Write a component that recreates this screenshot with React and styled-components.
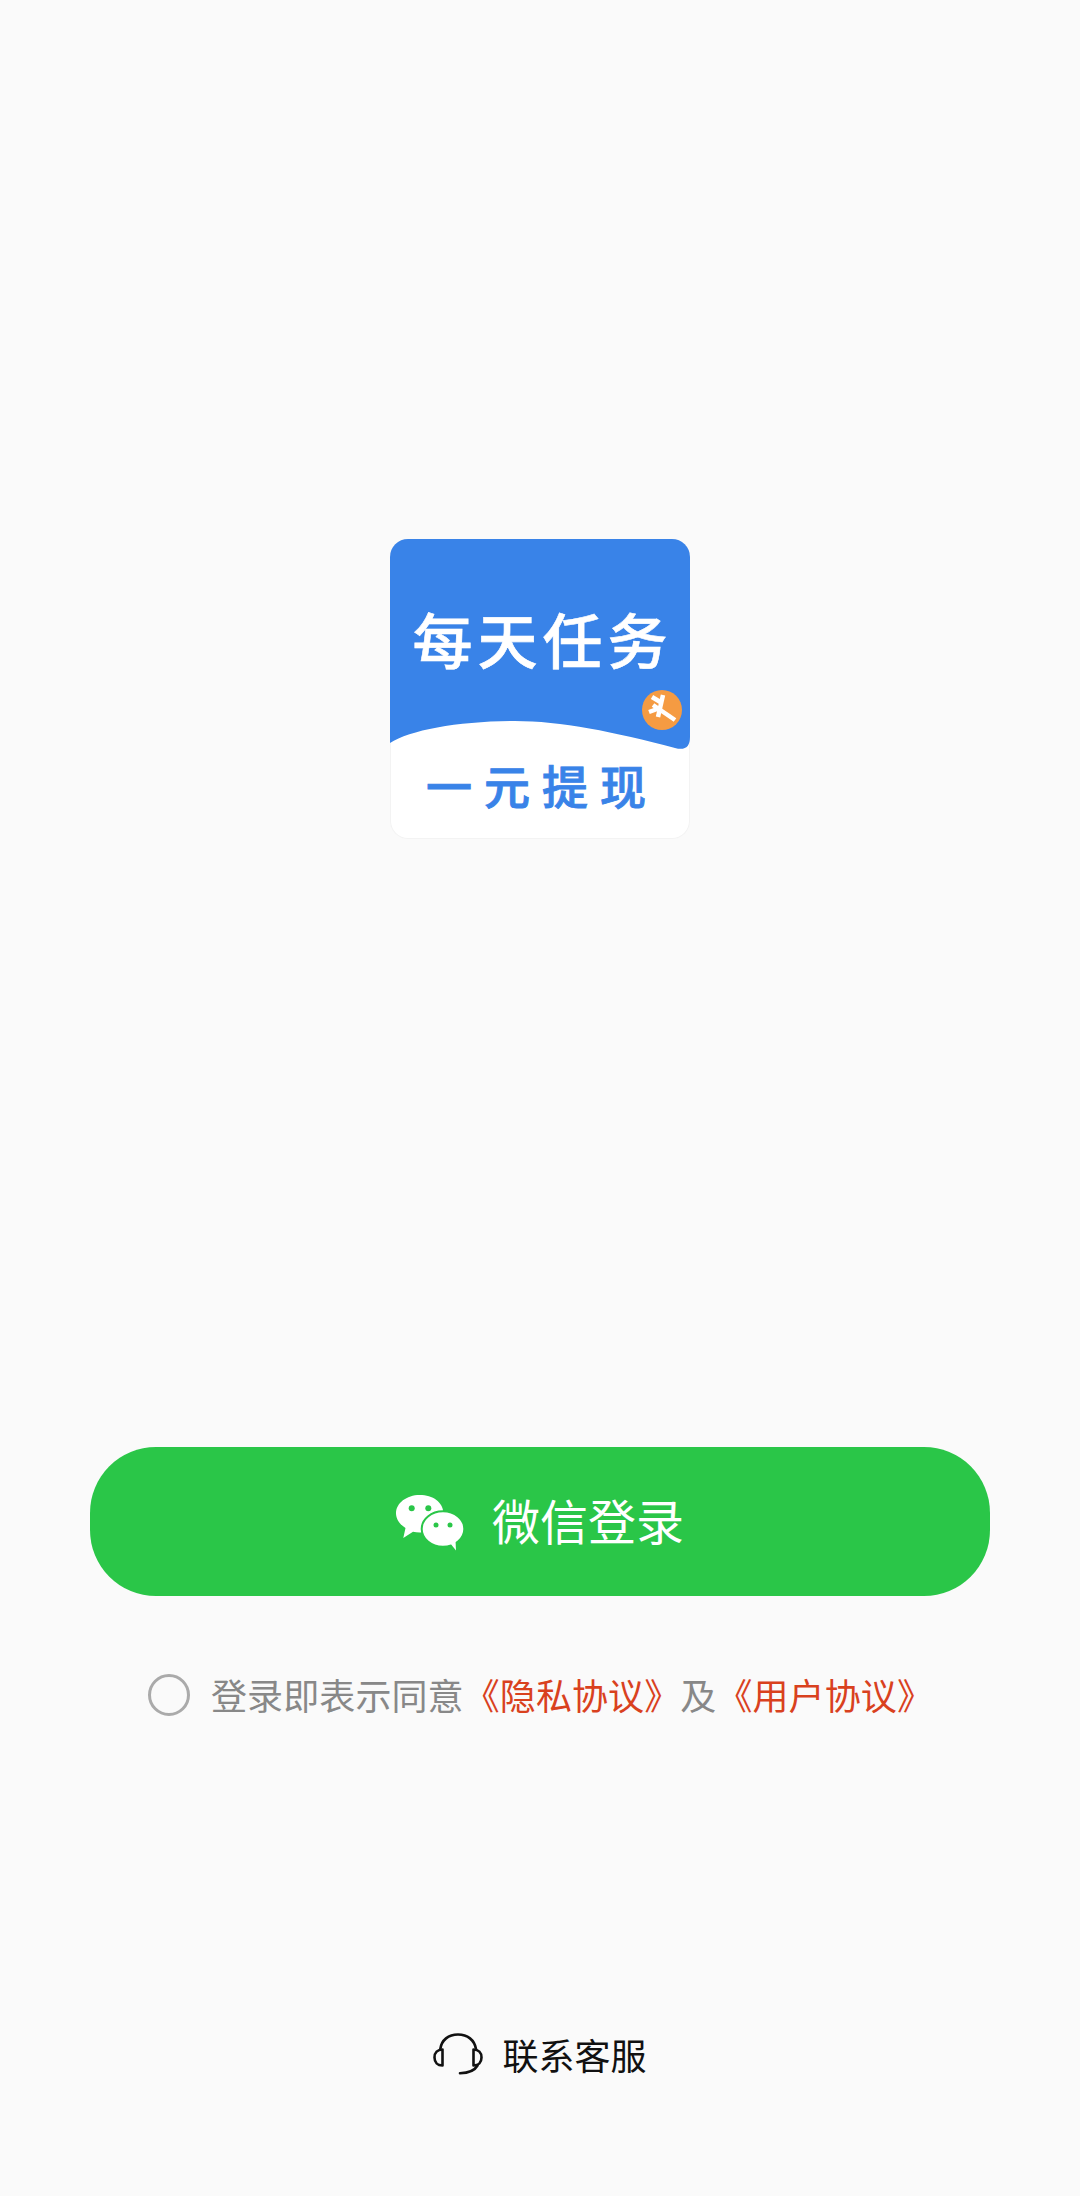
import React from 'react'
import styled, { createGlobalStyle } from 'styled-components'

const GlobalStyle = createGlobalStyle`
    html, body {
        margin: 0;
        padding: 0;
        background: #fafafa;
        font-family: "Noto Sans CJK SC", "Noto Sans", sans-serif;
    }
`

const Page = styled.div`
    width: 1080px;
    height: 2196px;
    background: #fafafa;
    display: flex;
    flex-direction: column;
    align-items: center;
    padding-top: 539px;
    box-sizing: border-box;
`

const Logo = styled.div`
    position: relative;
    width: 300px;
    height: 300px;
    border-radius: 18px;
    overflow: hidden;
    background: #fff;
    box-shadow: inset 0 0 0 1px #f3f3f3;
    display: flex;
    flex-direction: column;
    align-items: center;
`

const LogoShape = styled.svg`
    position: absolute;
    left: 0;
    top: 0;
`

const LogoTitle = styled.div`
    position: relative;
    margin-top: 56px;
    padding-left: 5px;
    height: 86px;
    line-height: 86px;
    font-size: 60px;
    font-weight: 500;
    -webkit-text-stroke: 0.6px #fff;
    letter-spacing: 5px;
    color: #fff;
    white-space: nowrap;
`

const LogoSub = styled.div`
    position: relative;
    margin-top: 70px;
    padding-left: 12px;
    margin-left: -8px;
    height: 66px;
    line-height: 66px;
    font-size: 46px;
    font-weight: 500;
    -webkit-text-stroke: 0.9px #3983e8;
    letter-spacing: 12px;
    color: #3983e8;
    white-space: nowrap;
`

const LoginButton = styled.button`
    width: 900px;
    height: 149px;
    margin-top: 608px;
    border: none;
    border-radius: 66px;
    background: #2ac648;
    color: #fff;
    display: flex;
    align-items: center;
    justify-content: center;
    gap: 28px;
    font-family: inherit;
    font-size: 48px;
    font-weight: 400;
    padding: 0 0 6px 0;
`

const WechatSvg = styled.svg`
    margin-top: 8px;
`

const Agreement = styled.div`
    margin-top: 75px;
    height: 46px;
    display: flex;
    align-items: center;
    align-self: flex-start;
    margin-left: 148px;
    font-size: 36px;
    letter-spacing: 0.1px;
    color: #888;
    white-space: nowrap;
`

const Radio = styled.span`
    width: 42px;
    height: 42px;
    box-sizing: border-box;
    border: 3px solid #aaa;
    border-radius: 50%;
    margin: 0 21px 0 0;
    position: relative;
    top: 1px;
`

const Link = styled.span`
    color: #d9411e;
`

const Contact = styled.div`
    margin-top: 312px;
    display: flex;
    align-items: center;
    gap: 19px;
    font-size: 36px;
    color: #111;
    height: 50px;
`

const WechatIcon = () => (
    <WechatSvg width="68" height="56" viewBox="0 0 68 56">
        <path d="M23.7 0C10.6 0 0 8.2 0 18.3c0 6 3.8 11.3 9.5 14.6L7.300 43l9.700-6.200c2.100.5 4.400.8 6.700.8 13.100 0 23.700-8.200 23.700-19.300S36.800 0 23.700 0z" fill="#fff" />
        <circle cx="15.700" cy="13.300" r="3" fill="#2ac648" />
        <circle cx="32.300" cy="13.300" r="3" fill="#2ac648" />
        <ellipse cx="47" cy="34" rx="21.300" ry="17.700" fill="#fff" stroke="#2ac648" strokeWidth="2" />
        <path d="M54 48l6 7.500-.5-10z" fill="#fff" />
        <circle cx="40" cy="30" r="2.500" fill="#2ac648" />
        <circle cx="54" cy="30" r="2.500" fill="#2ac648" />
    </WechatSvg>
)

const HeadsetIcon = () => (
    <svg width="50" height="42" viewBox="0 0 50 42" fill="none" stroke="#111" strokeWidth="2.600" strokeLinecap="round">
        <path d="M7.300 16C8.500 7 15.500 1.500 25 1.500S41.500 7 43 16" />
        <path d="M9.500 16.500C4.500 16.500 1.500 19.500 1.500 24.500S4.500 32.500 9.500 32.500z" strokeLinejoin="round" />
        <path d="M40.500 16.500C45.500 16.500 48.500 19.500 48.500 24.500S45.500 32.500 40.500 32.500z" strokeLinejoin="round" />
        <path d="M44.500 32.500C42 37 35 40 27 40.300" />
    </svg>
)

const App = () => {
    return (
        <Page>
            <GlobalStyle />
            <Logo>
                <LogoShape width="300" height="300" viewBox="0 0 300 300">
                    <path d="M0 0H300V198Q300 213 285 209C225 193 170 182 125 182C70 182 20 191 0 204Z" fill="#3983e8" />
                    <circle cx="272" cy="171" r="20" fill="#f59b42" />
                    <g stroke="#fff" strokeWidth="4.500" strokeLinecap="butt">
                        <path d="M263 166L285 181" />
                        <path d="M273 156L268 178" />
                        <path d="M262 158L272 164" />
                        <path d="M259 173L270 169" />
                    </g>
                </LogoShape>
                <LogoTitle>每天任务</LogoTitle>
                <LogoSub>一元提现</LogoSub>
            </Logo>
            <LoginButton>
                <WechatIcon />
                微信登录
            </LoginButton>
            <Agreement>
                <Radio />
                登录即表示同意<Link>《隐私协议》</Link>及<Link>《用户协议》</Link>
            </Agreement>
            <Contact>
                <HeadsetIcon />
                联系客服
            </Contact>
        </Page>
    )
}

export default App
